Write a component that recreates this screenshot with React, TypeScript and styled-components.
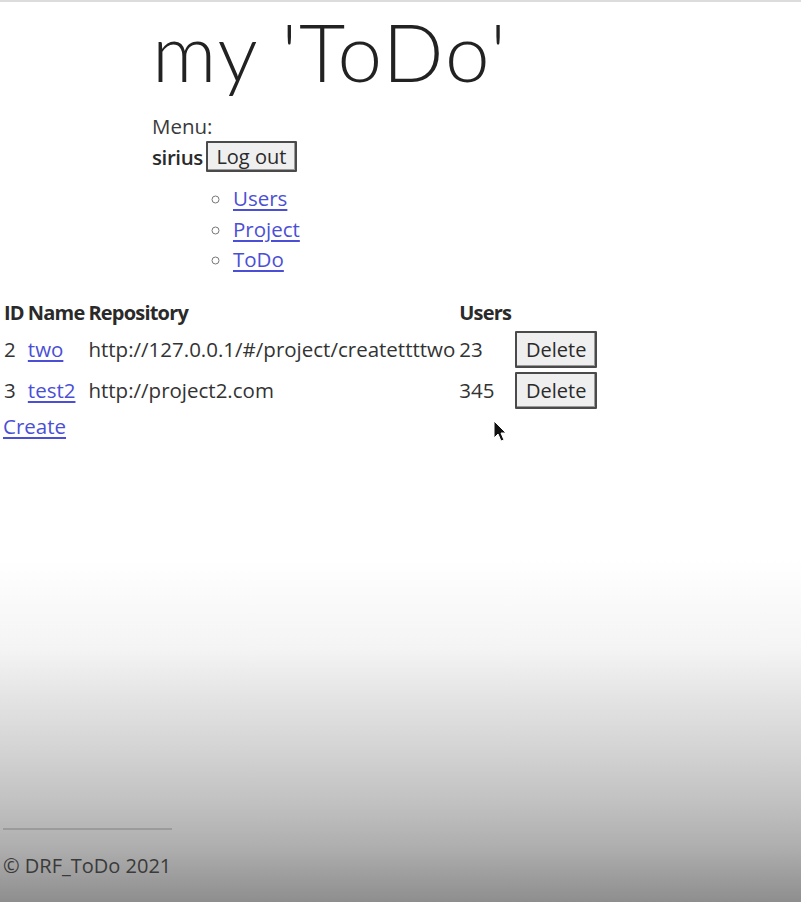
import React from "react";
import styled, { createGlobalStyle } from "styled-components";

const GlobalStyle = createGlobalStyle`
  html, body {
    margin: 0;
    padding: 0;
  }
  body {
    min-height: 902px;
    font-family: "Open Sans", "Noto Sans", sans-serif;
    color: #2e2e2e;
    background: linear-gradient(
      to bottom,
      #ffffff 0%,
      #ffffff 62%,
      #f4f4f4 72%,
      #e3e3e3 77.6%,
      #d4d4d4 83%,
      #c2c2c2 88.7%,
      #aeaeae 94%,
      #8e8e8e 100%
    );
    border-top: 2px solid #dcdcdc;
    box-sizing: border-box;
  }
`;

const Page = styled.div`
  position: relative;
  min-height: 900px;
  padding: 0 3px;
  display: flex;
  flex-direction: column;
  align-items: flex-start;
`;

const Header = styled.header`
  padding-left: 149px;
`;

const Title = styled.h1`
  margin: -1px 0 0 0;
  font-family: Lato, "Open Sans", sans-serif;
  font-size: 80px;
  font-weight: 300;
  line-height: 100px;
  letter-spacing: 2px;
  color: #222;
  white-space: nowrap;
`;

const Menu = styled.div`
  font-size: 20.5px;
  line-height: 26px;
  margin-top: 12px;
`;

const MenuLabel = styled.div`
  color: #3a3a3a;
`;

const UserRow = styled.div`
  display: flex;
  align-items: center;
  gap: 3px;
  margin-top: 2px;
`;

const UserName = styled.span`
  font-weight: 600;
  color: #2a2a2a;
  letter-spacing: -0.4px;
`;

const Button = styled.button<{ $tall?: boolean }>`
  font-family: inherit;
  font-size: 20px;
  color: #2a2a2a;
  background: #efefef;
  border: 2px solid #4a4a4a;
  border-radius: 1px;
  box-shadow: inset -1px -1px 0 #9a9a9a;
  padding: 0;
  height: ${(p) => (p.$tall ? "37px" : "31px")};
  width: ${(p) => (p.$tall ? "82px" : "91px")};
  cursor: pointer;
`;

const NavList = styled.ul`
  list-style: circle;
  margin: 11px 0 0 0;
  padding-left: 81px;
  font-size: 20.5px;
  line-height: 30.5px;

  li::marker {
    color: #777;
  }
`;

const Link = styled.a`
  color: #4b4fd6;
  text-decoration: underline;
  text-underline-offset: 3px;
`;

const Table = styled.table`
  margin-top: 22px;
  border-collapse: separate;
  border-spacing: 0;
  font-size: 20.5px;
  margin-left: 1px;
`;

const Th = styled.th`
  text-align: left;
  font-size: 20px;
  font-weight: 700;
  color: #2a2a2a;
  padding: 0 4px 0 0;
  height: 32px;
  vertical-align: middle;
  white-space: nowrap;
  letter-spacing: -0.8px;
`;

const Td = styled.td`
  padding: 2px 4px 2px 0;
  height: 37px;
  vertical-align: middle;
  color: #333;
  white-space: nowrap;
`;

const CreateLink = styled(Link)`
  font-size: 20.5px;
  margin-top: 1px;
`;

const Spacer = styled.div`
  flex: 1;
`;

const Footer = styled.footer`
  padding-bottom: 23px;
`;

const Rule = styled.hr`
  width: 169px;
  margin: 0 0 22px 0;
  border: none;
  border-top: 2px solid #9b9b9b;
`;

const Copy = styled.div`
  font-size: 20px;
  color: #3a3a3a;
`;

const Cursor = styled.svg`
  position: absolute;
  left: 493px;
  top: 418px;
  width: 16px;
  height: 24px;
`;

const projects = [
  { id: 2, name: "two", repo: "http://127.0.0.1/#/project/createttttwo", users: "23" },
  { id: 3, name: "test2", repo: "http://project2.com", users: "345" },
];

export default function App() {
  return (
    <>
      <GlobalStyle />
      <Page>
        <Header>
          <Title>my 'ToDo'</Title>
          <Menu>
            <MenuLabel>Menu:</MenuLabel>
            <UserRow>
              <UserName>sirius</UserName>
              <Button>Log out</Button>
            </UserRow>
          </Menu>
          <NavList>
            <li><Link href="#">Users</Link></li>
            <li><Link href="#">Project</Link></li>
            <li><Link href="#">ToDo</Link></li>
          </NavList>
        </Header>
        <Table>
          <thead>
            <tr>
              <Th>ID</Th>
              <Th>Name</Th>
              <Th>Repository</Th>
              <Th>Users</Th>
              <Th></Th>
            </tr>
          </thead>
          <tbody>
            {projects.map((p) => (
              <tr key={p.id}>
                <Td>{p.id}</Td>
                <Td><Link href="#">{p.name}</Link></Td>
                <Td>{p.repo}</Td>
                <Td>{p.users}</Td>
                <Td><Button $tall>Delete</Button></Td>
              </tr>
            ))}
          </tbody>
        </Table>
        <CreateLink href="#">Create</CreateLink>
        <Spacer />
        <Footer>
          <Rule />
          <Copy>© DRF_ToDo 2021</Copy>
        </Footer>
        <Cursor viewBox="0 0 16 24">
          <path d="M1 1 L1 18 L5 14 L8 21 L11 20 L8 13 L13 13 Z" fill="#111" stroke="#fff" strokeWidth="1" />
        </Cursor>
      </Page>
    </>
  );
}
